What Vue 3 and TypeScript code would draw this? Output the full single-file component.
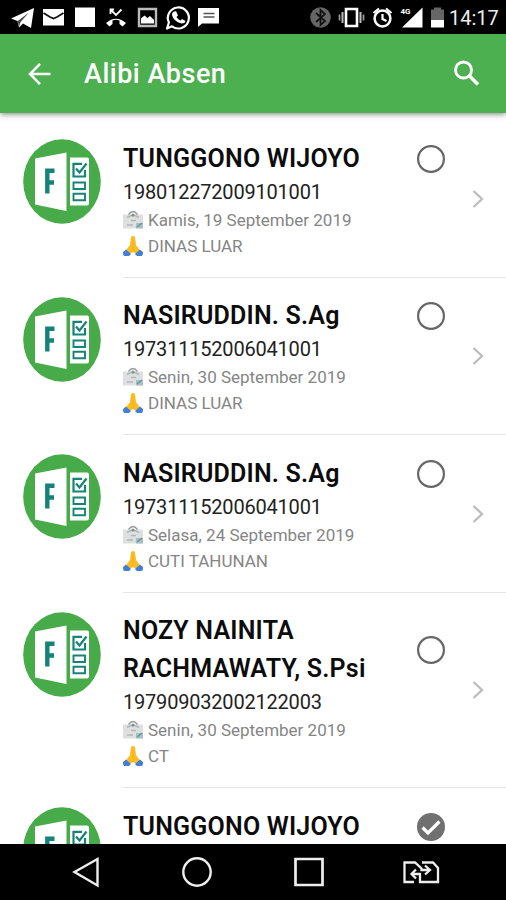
<script setup lang="ts">
interface Absence {
  id: number
  name: string[]
  nip?: string
  date?: string
  reason?: string
  checked: boolean
}

const items: Absence[] = [
  { id: 1, name: ['TUNGGONO WIJOYO'], nip: '198012272009101001', date: 'Kamis, 19 September 2019', reason: 'DINAS LUAR', checked: false },
  { id: 2, name: ['NASIRUDDIN. S.Ag'], nip: '197311152006041001', date: 'Senin, 30 September 2019', reason: 'DINAS LUAR', checked: false },
  { id: 3, name: ['NASIRUDDIN. S.Ag'], nip: '197311152006041001', date: 'Selasa, 24 September 2019', reason: 'CUTI TAHUNAN', checked: false },
  { id: 4, name: ['NOZY NAINITA', 'RACHMAWATY, S.Psi'], nip: '197909032002122003', date: 'Senin, 30 September 2019', reason: 'CT', checked: false },
  { id: 5, name: ['TUNGGONO WIJOYO'], checked: true },
]
</script>

<template>
  <div class="screen">
    <div class="status">
      <svg class="status-left" viewBox="0 0 230 34" fill="#fff">
        <path d="M11 18.500 L34 8 L31 28 L23 23.500 L19 27.500 L17.500 21 Z" />
        <path d="M17.800 21 L29 12.500 L20.500 22 L19 27 Z" fill="#444" />
        <path d="M43 9h21v16.500H43z" />
        <path d="M43.500 13 L50 17 L53.500 18.500 L57 17 L63.500 13" fill="none" stroke="#111" stroke-width="1.800" />
        <path d="M75 7.500h20v19.500H75z" />
        <path d="M106 23 Q116 14.500 126 23 L122.500 26.500 L119.500 24 V20.500 Q116 19.200 112.500 20.500 V24 L109.500 26.500 Z" />
        <path d="M110.500 14V9.500H114M111 10 L116 15 L121.500 9.500" fill="none" stroke="#fff" stroke-width="1.800" />
        <path d="M139 9h17v17h-17z" fill="none" stroke="#bbb" stroke-width="2.400" />
        <path d="M141 23.500v-5l3.500-3 3 2.500 2.500-2 4 4v3.500z" />
        <path d="M167 28.500 L168.900 22.500 A10.500 10.500 0 1 1 172 26.300 Z" fill="none" stroke="#fff" stroke-width="2.200" stroke-linejoin="round" />
        <path d="M173 12 L176 11 L178 15.500 L176.500 17 Q178 19.800 180.500 20.500 L182 19 L185.500 21 Q185 23.500 181.500 23.500 Q173.500 21.500 172 15 Q172 13 173 12Z" />
        <path d="M198 8h21v15.500h-17L198 27z" />
        <path d="M203.500 13.500h11M203.500 17h11" stroke="#555" stroke-width="1.500" />
      </svg>
      <div class="status-right">
        <svg class="status-icons" viewBox="0 0 136 34" fill="none">
          <circle cx="10.500" cy="17.500" r="10.300" fill="#666" />
          <path d="M6 13 L15 21 L10.500 25 V10 L15 14 L6 22" stroke="#111" stroke-width="1.700" />
          <path d="M36 9h11v17H36z" stroke="#fff" stroke-width="2.600" />
          <path d="M32.500 12v11M50.500 12v11" stroke="#bbb" stroke-width="2" />
          <path d="M29.500 14.500v6M53.500 14.500v6" stroke="#999" stroke-width="1.700" />
          <circle cx="72.500" cy="18.500" r="7.900" stroke="#fff" stroke-width="2.500" />
          <path d="M63.500 13 L69 8.500M76 8.500 L81.500 13M72.500 14v5l4 2" stroke="#fff" stroke-width="2.200" />
          <path d="M92 27.500 L112.500 7.500 V27.500z" fill="#fff" />
          <path d="M121 9.500h3V7.500h7v2h3V27h-13z" fill="#666" />
          <path d="M121 20h13v7.500h-13z" fill="#fff" />
          <text class="network" x="90.500" y="14" fill="#fff">4G</text>
        </svg>
        <span class="clock">14:17</span>
      </div>
    </div>

    <header class="appbar">
      <svg class="back" viewBox="0 0 24 24" fill="none" stroke="#fff" stroke-width="2.600">
        <path d="M23.500 12H3M13 1.800 L3 12 L13 22.200" />
      </svg>
      <h1 class="heading">Alibi Absen</h1>
      <svg class="search" viewBox="0 0 27 27" fill="none" stroke="#fff">
        <circle cx="10.500" cy="10" r="8" stroke-width="2.900" />
        <path d="M16 15.500 L25 24.500" stroke-width="3.500" />
      </svg>
    </header>

    <main class="list">
      <article v-for="item in items" :key="item.id" class="item">
        <svg class="avatar" viewBox="0 0 78 85">
          <ellipse cx="39" cy="42.500" rx="38.800" ry="42.300" fill="#46ab48" />
          <path d="M12 19.500 L43.500 13.500 V72 L12 65.500Z" fill="#fff" />
          <path d="M47 18.500h17q2 0 2 2v44q0 2-2 2H47z" fill="#fff" />
          <path d="M24.300 54.500V31.800H31.500M24.300 43.500H31" fill="none" stroke="#158476" stroke-width="4.400" />
          <g fill="none" stroke="#158476" stroke-width="1.900">
            <path d="M59 24.800H50.500V37.500H62V31M53 29.500 L56.500 33.500 L63.500 24.500" stroke-width="2.200" />
            <path d="M50.500 43.500h11.500v6.500H50.500zM50.500 54.800h11.500v6.500H50.500z" />
          </g>
        </svg>
        <div class="body">
          <div class="top">
            <h2 class="name">
              <span v-for="line in item.name" :key="line" class="line">{{ line }}</span>
            </h2>
            <svg class="radio" viewBox="0 0 28 28" fill="none">
              <template v-if="item.checked">
                <circle cx="14" cy="14" r="14" fill="#707070" />
                <path d="M5.500 14.500 L11 20 L22.500 8.500" stroke="#fff" stroke-width="3.200" />
              </template>
              <circle v-else cx="14" cy="14" r="12.900" stroke="#666" stroke-width="2.200" />
            </svg>
          </div>
          <div v-if="item.nip" class="nip">{{ item.nip }}</div>
          <div v-if="item.date" class="meta">
            <svg class="glyph" viewBox="0 0 20 20">
              <path d="M0 4.500h20v14H0z" fill="#dde0e0" />
              <path d="M5.500 4.500 Q10-1.500 14.500 4.500" fill="none" stroke="#959a9b" stroke-width="1.300" />
              <path d="M4 7.500 L8 5.500H12L16 7.500M8 10.500h5M4 15h6" fill="none" stroke="#b2b7b8" stroke-width="1.500" />
              <circle cx="10" cy="5" r="1.500" fill="#858b8d" />
              <path d="M13 13h7v5.500h-7z" fill="#a5c0c6" />
              <path d="M14 17l5-4" stroke="#678f9b" stroke-width="1.200" />
            </svg>
            <span>{{ item.date }}</span>
          </div>
          <div v-if="item.reason" class="meta">
            <svg class="glyph" viewBox="0 0 20 20">
              <path d="M8 1 Q10-1 12 1 L13 9 L17.500 15 L13.500 18 L10 16 L6.500 18 L2.500 15 L7 9Z" fill="#fbbc24" />
              <path d="M10 3v12" stroke="#efa516" stroke-width=".6" />
              <path d="M3 13.500 L8 18 L6 20H1.500Q0 20 0 16ZM17 13.500 L12 18 L14 20H18.500Q20 20 20 16Z" fill="#427fd5" />
            </svg>
            <span>{{ item.reason }}</span>
          </div>
        </div>
        <svg class="chevron" viewBox="0 0 12 18" fill="none">
          <path d="M1.500 1 L10 9 L1.500 17" stroke="#bcbcbc" stroke-width="2.300" />
        </svg>
      </article>
    </main>

    <nav class="navbar">
      <svg viewBox="0 0 506 56" fill="none" stroke="#eee" stroke-width="2.400">
        <path d="M74.500 28 L97.500 15 V41.500Z" />
        <circle cx="197" cy="28" r="13.700" />
        <path d="M295.500 15h27v26h-27z" stroke-width="2.700" />
        <path d="M414 38H404.500V18.500H415L421.500 24.500V26H430M425 21.500 L430 26 L425 30.500M422 18.500H433L438 24V38H420V30H411.500M416 25.500 L411.500 30 L416 34.500" stroke-width="2.300" />
      </svg>
    </nav>
  </div>
</template>

<style>
body {
  margin: 0;
  overflow: hidden;
}
</style>

<style scoped>
.screen {
  display: flex;
  flex-direction: column;
  width: 506px;
  height: 900px;
  overflow: hidden;
  background: #fff;
  font-family: Roboto, "Liberation Sans", sans-serif;
}
.status {
  flex: none;
  display: flex;
  justify-content: space-between;
  height: 34px;
  background: #000;
}
.status-left {
  width: 230px;
  height: 34px;
}
.status-right {
  display: flex;
  align-items: center;
  width: 196px;
}
.status-icons {
  width: 136px;
  height: 34px;
}
.network {
  font: 700 8px Roboto, sans-serif;
}
.clock {
  margin-left: 3px;
  padding-top: 2px;
  color: #eee;
  font-size: 20px;
  line-height: 34px;
  white-space: nowrap;
}
.appbar {
  flex: none;
  z-index: 1;
  display: flex;
  align-items: center;
  box-sizing: border-box;
  height: 79px;
  padding: 0 26px 0 27px;
  background: #4caf50;
  box-shadow: 0 1px 6px rgba(0, 0, 0, 0.5);
}
.back {
  width: 24px;
  height: 24px;
}
.heading {
  flex: 1;
  margin: 0 0 0 33px;
  color: #fff;
  font-size: 27px;
  font-weight: 500;
  line-height: 40px;
  letter-spacing: 0.5px;
}
.search {
  width: 27px;
  height: 27px;
}
.list {
  flex: 1;
  min-height: 0;
  overflow: hidden;
  padding-top: 7px;
}
.item {
  display: flex;
  align-items: flex-start;
  min-height: 157.500px;
  padding-left: 23px;
}
.avatar {
  flex: none;
  width: 78px;
  height: 85px;
  margin: 19px 22px 0 0;
}
.body {
  flex: 1;
  box-sizing: border-box;
  padding: 19.500px 0 18px;
  border-bottom: 1px solid #e6e6e6;
}
.item:last-child .body {
  border-bottom: 0;
}
.top {
  display: flex;
  align-items: center;
  justify-content: space-between;
  padding-right: 61px;
}
.name {
  margin: 0;
  color: #0c0c0c;
  font-size: 25px;
  font-weight: 600;
  line-height: 38px;
  letter-spacing: 0.2px;
}
.line {
  display: block;
  white-space: nowrap;
}
.radio {
  width: 28px;
  height: 28px;
}
.nip,
.meta {
  white-space: nowrap;
}
.nip {
  height: 29px;
  color: #222;
  font-size: 20px;
  line-height: 29px;
  letter-spacing: -0.2px;
}
.meta {
  display: flex;
  align-items: center;
  gap: 5px;
  height: 26px;
  color: #858585;
  font-size: 17px;
  line-height: 26px;
}
.glyph {
  width: 20px;
  height: 20px;
}
.chevron {
  align-self: center;
  width: 12px;
  height: 18px;
  margin: 0 22px 0 -34px;
}
.navbar {
  flex: none;
  height: 56px;
  background: #000;
}
.navbar svg {
  display: block;
  width: 506px;
  height: 56px;
}
</style>
